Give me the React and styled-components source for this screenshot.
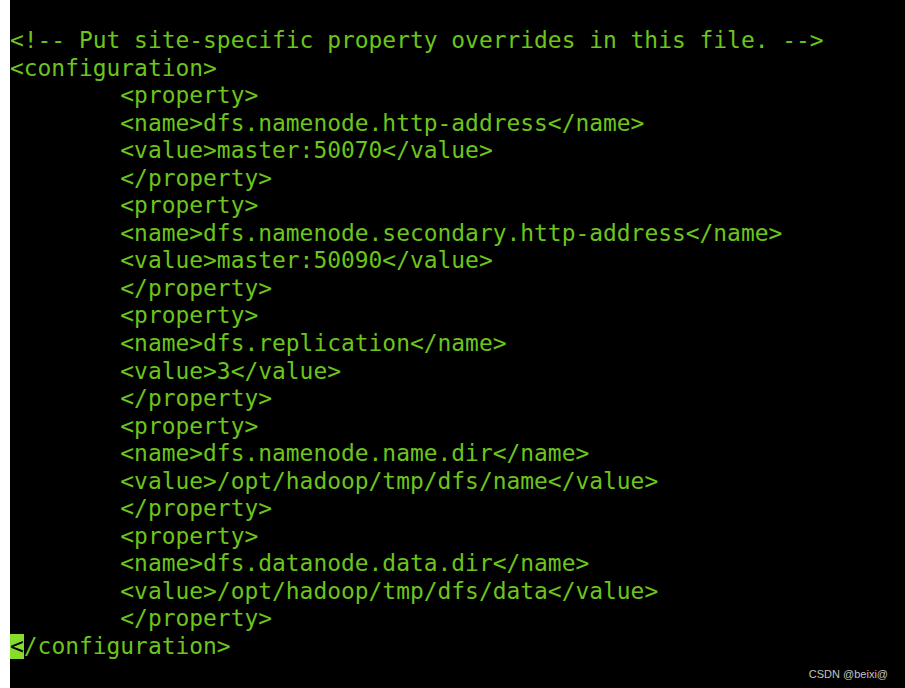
import React from "react"
import styled, { createGlobalStyle } from "styled-components"

const lines = [
  "<!-- Put site-specific property overrides in this file. -->",
  "<configuration>",
  "\t<property>",
  "\t<name>dfs.namenode.http-address</name>",
  "\t<value>master:50070</value>",
  "\t</property>",
  "\t<property>",
  "\t<name>dfs.namenode.secondary.http-address</name>",
  "\t<value>master:50090</value>",
  "\t</property>",
  "\t<property>",
  "\t<name>dfs.replication</name>",
  "\t<value>3</value>",
  "\t</property>",
  "\t<property>",
  "\t<name>dfs.namenode.name.dir</name>",
  "\t<value>/opt/hadoop/tmp/dfs/name</value>",
  "\t</property>",
  "\t<property>",
  "\t<name>dfs.datanode.data.dir</name>",
  "\t<value>/opt/hadoop/tmp/dfs/data</value>",
  "\t</property>",
]

const GlobalStyle = createGlobalStyle`
  html, body {
    margin: 0;
    padding: 0;
    background: #ffffff;
  }
`

const Page = styled.div`
  display: flex;
  width: 905px;
  height: 688px;
  background: #ffffff;
`

const Terminal = styled.div`
  position: relative;
  flex: 1;
  margin-left: 10px;
  padding-top: 27px;
  background: #000000;
  overflow: hidden;
`

const Line = styled.div`
  height: 27.55px;
  line-height: 27.55px;
  font-family: "DejaVu Sans Mono", "Liberation Mono", monospace;
  font-size: 22.92px;
  color: #6cc51c;
  white-space: pre;
  tab-size: 8;
`

const Cursor = styled.span`
  display: inline-block;
  height: 25px;
  line-height: 25px;
  background: #86dc2c;
  color: #000000;
`

const Watermark = styled.div`
  position: absolute;
  right: 17px;
  bottom: 8px;
  font-family: "Liberation Sans", Arial, sans-serif;
  font-size: 11px;
  color: #c4c4c4;
`

const App = () => {
  return (
    <Page>
      <GlobalStyle />
      <Terminal>
        {lines.map((text, i) => (
          <Line key={i}>{text}</Line>
        ))}
        <Line>
          <Cursor>&lt;</Cursor>/configuration&gt;
        </Line>
        <Watermark>CSDN @beixi@</Watermark>
      </Terminal>
    </Page>
  )
}

export default App
